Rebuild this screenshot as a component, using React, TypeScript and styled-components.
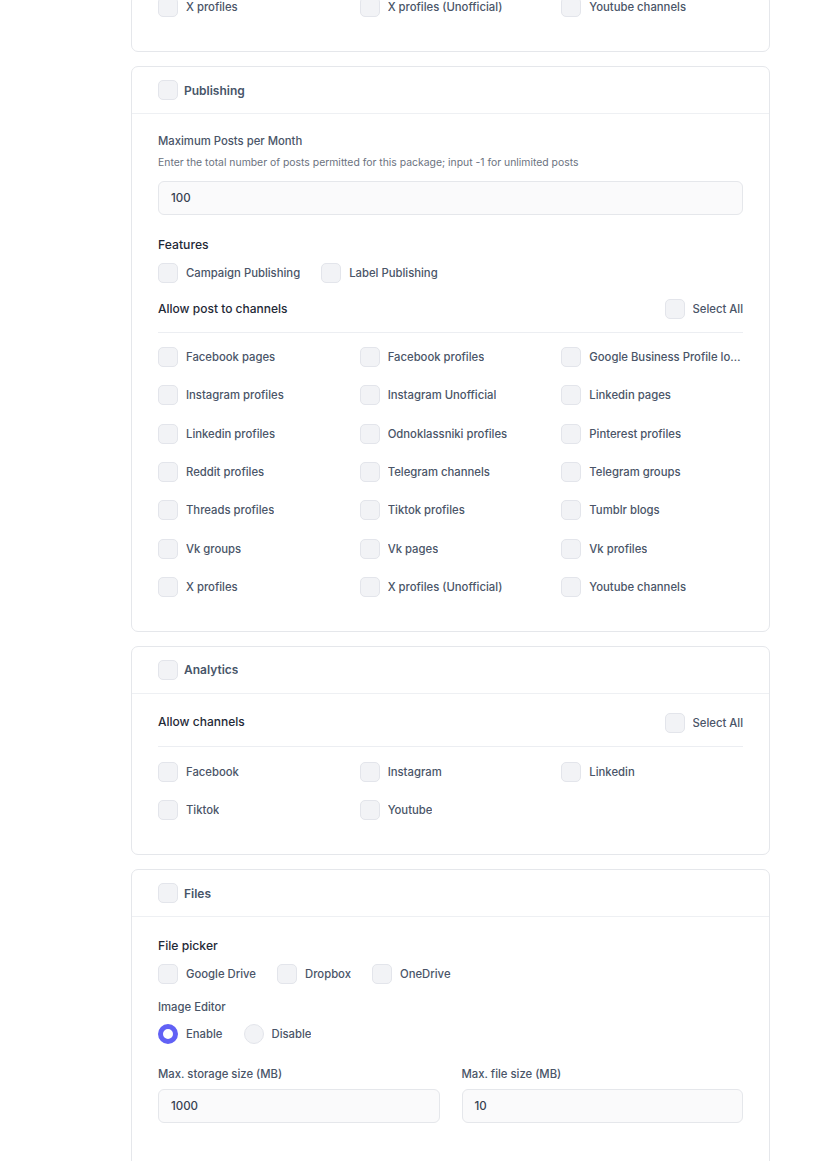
import React from "react";
import styled, { createGlobalStyle } from "styled-components";

const GlobalStyle = createGlobalStyle`
  * { box-sizing: border-box; }
  html, body { margin: 0; padding: 0; background: #ffffff; }
  body { font-family: Inter, "Noto Sans", "Liberation Sans", sans-serif; overflow: hidden; }
`;

const Page = styled.div`
  width: 639px;
  margin-left: 131px;
  margin-top: -6px;
  display: flex;
  flex-direction: column;
  gap: 14px;
`;

const Card = styled.section`
  border: 1px solid #e5e7eb;
  border-radius: 7px;
  background: #fff;
`;

const CardHeader = styled.div`
  height: 47px;
  padding: 0 26px;
  display: flex;
  align-items: center;
  border-bottom: 1px solid #eef0f3;
`;

const CardBody = styled.div<{ $top?: number; $bottom?: number }>`
  padding: ${(p) => p.$top ?? 18}px 26px ${(p) => p.$bottom ?? 35}px;
  display: flex;
  flex-direction: column;
`;

const Box = styled.span<{ $round?: boolean; $checked?: boolean }>`
  flex: none;
  width: 20px;
  height: 20px;
  border-radius: ${(p) => (p.$round ? "50%" : "5px")};
  background: ${(p) => (p.$checked ? "#fff" : "#f2f3f6")};
  border: ${(p) => (p.$checked ? "5.5px solid #6161f5" : "1px solid #e3e5eb")};
`;

const Item = styled.label<{ $header?: boolean }>`
  display: flex;
  align-items: center;
  gap: ${(p) => (p.$header ? "6px" : "8px")};
  min-width: 0;
  height: 20px;
  font-size: ${(p) => (p.$header ? "12px" : "11.3px")};
  font-weight: ${(p) => (p.$header ? 600 : 500)};
  color: ${(p) => (p.$header ? "#475569" : "#4a5568")};
`;

const ItemText = styled.span`
  white-space: nowrap;
  overflow: hidden;
  text-overflow: ellipsis;
  min-width: 0;
`;

const FieldLabel = styled.div<{ $mt?: number }>`
  font-size: 11.3px;
  font-weight: 500;
  line-height: 16px;
  color: #4a5568;
  margin-top: ${(p) => p.$mt ?? 0}px;
`;

const Helper = styled.div`
  font-size: 10.4px;
  line-height: 14px;
  color: #6b7280;
  margin-top: 7px;
`;

const Input = styled.div<{ $mt?: number }>`
  height: 34px;
  margin-top: ${(p) => p.$mt ?? 11}px;
  border: 1px solid #e5e7eb;
  border-radius: 6px;
  background: #fafafb;
  padding: 0 12px;
  display: flex;
  align-items: center;
  font-size: 11.5px;
  font-weight: 500;
  color: #374151;
`;

const SectionTitle = styled.div<{ $mt?: number }>`
  font-size: 12.2px;
  font-weight: 500;
  line-height: 18px;
  color: #1f2937;
  margin-top: ${(p) => p.$mt ?? 0}px;
`;

const InlineRow = styled.div<{ $mt?: number }>`
  display: flex;
  gap: 21px;
  margin-top: ${(p) => p.$mt ?? 8}px;
`;

const AllowRow = styled.div<{ $mt?: number }>`
  display: flex;
  align-items: center;
  justify-content: space-between;
  height: 20px;
  margin-top: ${(p) => p.$mt ?? 0}px;
`;

const AllowTitle = styled.div`
  font-size: 12px;
  font-weight: 500;
  color: #1f2937;
  margin-top: -2px;
`;

const Divider = styled.div<{ $mt?: number }>`
  height: 1px;
  background: #eceef2;
  margin-top: ${(p) => p.$mt ?? 13}px;
`;

const Grid = styled.div<{ $mt?: number }>`
  display: grid;
  grid-template-columns: repeat(3, minmax(0, 1fr));
  column-gap: 20px;
  row-gap: 18.33px;
  margin-top: ${(p) => p.$mt ?? 14}px;
`;

const TwoCols = styled.div`
  display: grid;
  grid-template-columns: 1fr 1fr;
  column-gap: 22px;
  margin-top: 22px;
`;

const Field = styled.div`
  display: flex;
  flex-direction: column;
`;

const Check = ({ label, header }: { label: string; header?: boolean }) => (
  <Item $header={header}>
    <Box />
    <ItemText>{label}</ItemText>
  </Item>
);

const Radio = ({ label, checked }: { label: string; checked?: boolean }) => (
  <Item>
    <Box $round $checked={checked} />
    <ItemText>{label}</ItemText>
  </Item>
);

const publishChannels = [
  "Facebook pages",
  "Facebook profiles",
  "Google Business Profile locations",
  "Instagram profiles",
  "Instagram Unofficial",
  "Linkedin pages",
  "Linkedin profiles",
  "Odnoklassniki profiles",
  "Pinterest profiles",
  "Reddit profiles",
  "Telegram channels",
  "Telegram groups",
  "Threads profiles",
  "Tiktok profiles",
  "Tumblr blogs",
  "Vk groups",
  "Vk pages",
  "Vk profiles",
  "X profiles",
  "X profiles (Unofficial)",
  "Youtube channels",
];

const analyticsChannels = ["Facebook", "Instagram", "Linkedin", "Tiktok", "Youtube"];

export default function App() {
  return (
    <>
      <GlobalStyle />
      <Page>
        <Card>
          <CardBody $top={2} $bottom={34}>
            <Grid $mt={0}>
              {publishChannels.slice(-3).map((c) => (
                <Check key={c} label={c} />
              ))}
            </Grid>
          </CardBody>
        </Card>

        <Card>
          <CardHeader>
            <Check header label="Publishing" />
          </CardHeader>
          <CardBody $top={19} $bottom={34}>
            <FieldLabel>Maximum Posts per Month</FieldLabel>
            <Helper>
              Enter the total number of posts permitted for this package; input -1 for unlimited posts
            </Helper>
            <Input>100</Input>
            <SectionTitle $mt={21}>Features</SectionTitle>
            <InlineRow $mt={9}>
              <Check label="Campaign Publishing" />
              <Check label="Label Publishing" />
            </InlineRow>
            <AllowRow $mt={16}>
              <AllowTitle>Allow post to channels</AllowTitle>
              <Check label="Select All" />
            </AllowRow>
            <Divider />
            <Grid>
              {publishChannels.map((c) => (
                <Check key={c} label={c} />
              ))}
            </Grid>
          </CardBody>
        </Card>

        <Card>
          <CardHeader>
            <Check header label="Analytics" />
          </CardHeader>
          <CardBody $top={19} $bottom={34}>
            <AllowRow>
              <AllowTitle>Allow channels</AllowTitle>
              <Check label="Select All" />
            </AllowRow>
            <Divider $mt={13} />
            <Grid $mt={15}>
              {analyticsChannels.map((c) => (
                <Check key={c} label={c} />
              ))}
            </Grid>
          </CardBody>
        </Card>

        <Card>
          <CardHeader>
            <Check header label="Files" />
          </CardHeader>
          <CardBody $top={20}>
            <SectionTitle>File picker</SectionTitle>
            <InlineRow $mt={9}>
              <Check label="Google Drive" />
              <Check label="Dropbox" />
              <Check label="OneDrive" />
            </InlineRow>
            <FieldLabel $mt={15}>Image Editor</FieldLabel>
            <InlineRow $mt={9}>
              <Radio label="Enable" checked />
              <Radio label="Disable" />
            </InlineRow>
            <TwoCols>
              <Field>
                <FieldLabel>Max. storage size (MB)</FieldLabel>
                <Input $mt={7}>1000</Input>
              </Field>
              <Field>
                <FieldLabel>Max. file size (MB)</FieldLabel>
                <Input $mt={7}>10</Input>
              </Field>
            </TwoCols>
            <SectionTitle $mt={40}>&nbsp;</SectionTitle>
          </CardBody>
        </Card>
      </Page>
    </>
  );
}
